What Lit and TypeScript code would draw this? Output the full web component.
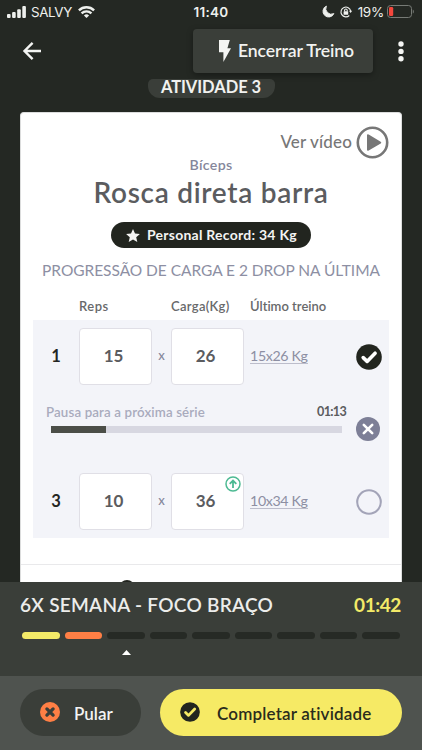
import { LitElement, html, css, svg } from "lit";
import { customElement, property } from "lit/decorators.js";
import { classMap } from "lit/directives/class-map.js";
import { styleMap } from "lit/directives/style-map.js";

const base = css`
  * { box-sizing: border-box; }
  svg { display: block; flex: none; overflow: visible; }
  span, div { white-space: nowrap; font-variant-ligatures: none; }
`;

const checkMark = svg`<path d="M7.2 13.6l3.9 3.8 8-8.2" fill="none" stroke="var(--mark, #fff)" stroke-width="3.6" stroke-linecap="round" stroke-linejoin="round"/>`;

@customElement("status-bar")
export class StatusBar extends LitElement {
  static styles = [base, css`
    :host { display: grid; grid-template-columns: 1fr auto 1fr; align-items: center; height: 23px; padding: 0 7px; color: #eef0ed; font: 400 14px/20px Inter, "Liberation Sans", sans-serif; }
    .side { display: flex; align-items: center; }
    .end { justify-content: flex-end; }
    .carrier { margin: 0 6px 0 5px; font-size: 13.4px; letter-spacing: -.4px; }
    .clock { font-size: 13.5px; font-weight: 600; letter-spacing: .3px; }
    .pct { margin: 0 3px 0 6px; font-size: 13.5px; letter-spacing: -.25px; }
    .lock { margin-left: 6px; }
    .batt { margin-right: 1px; }
  `];
  render() {
    return html`
      <div class="side">
        <svg width="19" height="12" viewBox="0 0 19 12" fill="#eef0ed">
          <rect x="0" y="8" width="3.6" height="4" rx="1"/><rect x="5.1" y="6" width="3.6" height="6" rx="1"/><rect x="10.2" y="3.2" width="3.6" height="8.8" rx="1"/><rect x="15.3" y="0" width="3.6" height="12" rx="1"/>
        </svg>
        <span class="carrier">SALVY</span>
        <svg width="17" height="12" viewBox="0 0 17 12" fill="none" stroke="#eef0ed" stroke-width="2.4">
          <path d="M.9 4.3a10.9 10.9 0 0 1 15.2 0"/><path d="M3.6 7.4a7 7 0 0 1 9.8 0"/><path d="M8.5 12L5.9 9.5a3.7 3.7 0 0 1 5.2 0z" fill="#eef0ed" stroke="none"/>
        </svg>
      </div>
      <span class="clock">11:40</span>
      <div class="side end">
        <svg width="11" height="11" viewBox="0 0 11 11" fill="#eef0ed"><path d="M3.4.1A5.7 5.7 0 1 0 10.9 7.6 5.6 5.6 0 0 1 3.4.1z" stroke="#eef0ed" stroke-width=".9"/></svg>
        <svg class="lock" width="12" height="12" viewBox="0 0 12 12" fill="none" stroke="#eef0ed" stroke-width="1.1">
          <path d="M9.3 9.5A4.9 4.9 0 1 1 10.7 5"/><path d="M9 4.8h3.2L10.6 7z" fill="#eef0ed" stroke="none"/>
          <rect x="3.6" y="5.3" width="4.6" height="3.5" rx=".5" fill="#eef0ed" stroke="none"/><path d="M4.6 5.4V4.3a1.3 1.3 0 0 1 2.6 0v1.1"/>
        </svg>
        <span class="pct">19%</span>
        <svg class="batt" width="27" height="13" viewBox="0 0 27 13">
          <rect x=".5" y=".5" width="24" height="12" rx="3" fill="none" stroke="#777b76"/><rect x="2" y="2" width="4.2" height="9" rx="1.3" fill="#f4473c"/><path d="M25.8 4.4c1.4.6 1.4 3.6 0 4.2z" fill="#777b76"/>
        </svg>
      </div>`;
  }
}

@customElement("set-row")
export class SetRow extends LitElement {
  @property({ type: Number }) index = 1;
  @property({ type: Number }) reps = 0;
  @property({ type: Number }) load = 0;
  @property() last = "";
  @property({ type: Boolean }) done = false;
  @property({ type: Boolean }) raised = false;
  static styles = [base, css`
    :host { display: grid; grid-template-columns: 46px 73px 19px 73px 6px 1fr 33px; align-items: center; height: 57px; color: #5b5c5f; }
    .n { text-align: center; color: #232522; font-weight: 700; font-size: 16.5px; margin-top: -2px; }
    .box { position: relative; height: 57px; display: flex; align-items: center; justify-content: center; background: #fff; border: 1.5px solid #e0dfe6; border-radius: 4px; font-weight: 700; font-size: 17px; letter-spacing: -.2px; padding-right: 4px; padding-bottom: 3px; }
    .x { text-align: center; color: #85879b; font-size: 13px; font-weight: 500; margin-top: -3px; }
    .last { grid-column: 6; justify-self: start; color: #8d8fa3; font-size: 14.2px; letter-spacing: -.35px; line-height: 14px; border-bottom: 1px solid #bcbdcb; height: 15px; margin-top: -1px; }
    .raise { position: absolute; top: 2px; right: 2px; }
    .mark { margin-top: 1px; }
  `];
  render() {
    return html`
      <span class="n">${this.index}</span>
      <div class="box">${this.reps}</div>
      <span class="x">x</span>
      <div class="box">${this.load}${this.raised ? html`
        <svg class="raise" width="16" height="16" viewBox="0 0 16 16" fill="none" stroke="#4dba93" stroke-width="1.5"><circle cx="8" cy="8" r="7"/><path d="M8 12V4.6M4.7 7.9L8 4.6l3.3 3.3" stroke-width="1.8"/></svg>` : ""}</div>
      <span class="last">${this.last}</span>
      <svg class="mark" width="26" height="26" viewBox="0 0 26 26">${this.done
        ? svg`<circle cx="13" cy="13" r="12.8" fill="#22251f"/>${checkMark}`
        : svg`<circle cx="13" cy="13" r="11.8" fill="none" stroke="#a3a4b8" stroke-width="2.1"/>`}</svg>`;
  }
}

@customElement("exercise-card")
export class ExerciseCard extends LitElement {
  static styles = [base, css`
    :host { display: block; height: 470px; margin: 14px 20px 0; background: #fff; border-radius: 4px 4px 0 0; border: 1px solid #dcdddd; border-bottom: 0; color: #5b5c5f; overflow: hidden; }
    .video { display: flex; align-items: center; justify-content: flex-end; height: 32px; margin: 13px 12px 0; font-size: 17px; color: #777; font-weight: 500; gap: 4px; letter-spacing: .15px; }
    .video span { margin-top: -2px; }
    .muscle { text-align: center; margin-top: -3px; height: 20px; line-height: 19px; font-size: 14.2px; letter-spacing: .35px; font-weight: 600; color: #85879b; }
    .name { text-align: center; font-size: 28px; line-height: 32px; height: 34px; margin-top: 1px; font-weight: 600; letter-spacing: .7px; }
    .record { display: flex; align-items: center; width: 200px; height: 26px; margin: 12px auto 0; padding-left: 15px; gap: 7px; border-radius: 14px; background: #22251f; color: #f4f4f3; font-size: 14px; letter-spacing: .25px; font-weight: 700; }
    .record span { margin-top: -2px; }
    .note { text-align: center; margin-top: 12px; height: 22px; line-height: 21px; font-size: 15.5px; letter-spacing: -.04px; color: #8d8fa3; }
    .heads { display: grid; grid-template-columns: 92px 79px 1fr; padding-left: 58px; margin-top: 14px; height: 24px; line-height: 20px; font-size: 13px; font-weight: 600; color: #68696b; }
    .reps { letter-spacing: .45px; }
    .load { letter-spacing: .3px; }
    .sets { margin: 0 12px; padding: 8px 0; height: 218px; background: #f3f4f9; }
    .rest { display: grid; grid-template-columns: 1fr 43px; height: 88px; padding: 18px 0 0 13px; }
    .labels { display: flex; justify-content: space-between; line-height: 18px; font-size: 13.3px; color: #a9abbd; font-weight: 600; }
    .pause { letter-spacing: .13px; }
    .time { color: #5b5c5f; font-size: 12.6px; letter-spacing: -.7px; font-weight: 700; }
    .track { margin: 5px 4px 0 5px; height: 7px; background: #d7d7e1; }
    .fill { height: 7px; background: #4b4e48; }
    .stop { margin: 14px 0 0 10px; }
    .rule { margin-top: 26px; border-top: 1px solid #e9e9eb; height: 18px; display: flex; align-items: flex-end; padding-left: 98px; }
    .next { width: 16px; height: 2px; overflow: hidden; }
  `];
  render() {
    return html`
      <div class="video"><span>Ver vídeo</span><svg width="33" height="33" viewBox="0 0 33 33"><circle cx="16.5" cy="16.5" r="14.7" fill="none" stroke="#777" stroke-width="2.6"/><path d="M11 9.5v14q0 2 1.7 1l12-7q1.3-.9 0-1.8l-12-7.1q-1.7-1-1.7.9z" fill="#777"/></svg></div>
      <div class="muscle">Bíceps</div>
      <div class="name">Rosca direta barra</div>
      <div class="record"><svg width="14" height="13" viewBox="0 0 14 13" fill="#f4f4f3"><path d="M7 0l2 4.5 4.9.5-3.7 3.3 1.1 4.7L7 10.5 2.7 13l1.1-4.7L.1 5 5 4.5z"/></svg><span>Personal Record: 34 Kg</span></div>
      <div class="note">PROGRESSÃO DE CARGA E 2 DROP NA ÚLTIMA</div>
      <div class="heads"><span class="reps">Reps</span><span class="load">Carga(Kg)</span><span>Último treino</span></div>
      <div class="sets">
        <set-row .index=${1} .reps=${15} .load=${26} .last=${"15x26 Kg"} done></set-row>
        <div class="rest">
          <div>
            <div class="labels"><span class="pause">Pausa para a próxima série</span><span class="time">01:13</span></div>
            <div class="track"><div class="fill" style=${styleMap({ width: "19%" })}></div></div>
          </div>
          <svg class="stop" width="24" height="24" viewBox="0 0 24 24"><circle cx="12" cy="12" r="12" fill="#7d7f97"/><path d="M7.8 7.8l8.4 8.4M16.2 7.8l-8.4 8.4" stroke="#fff" stroke-width="2.6" stroke-linecap="round"/></svg>
        </div>
        <set-row .index=${3} .reps=${10} .load=${36} .last=${"10x34 Kg"} raised></set-row>
      </div>
      <div class="rule"><div class="next"><svg width="16" height="16" viewBox="0 0 16 16"><circle cx="8" cy="8" r="8" fill="#22251f"/></svg></div></div>`;
  }
}

@customElement("workout-footer")
export class WorkoutFooter extends LitElement {
  static styles = [base, css`
    :host { display: block; }
    .plan { height: 94px; background: #3a3e39; padding: 12px 20px 0; }
    .line { display: flex; justify-content: space-between; height: 22px; line-height: 21px; font-size: 19px; font-weight: 600; color: #ecedeb; letter-spacing: .28px; }
    .elapsed { color: #f3ea68; letter-spacing: -.4px; font-weight: 700; padding-right: 1px; }
    .steps { display: grid; grid-template-columns: repeat(9, 1fr); gap: 5px; margin: 16px 2px 0; }
    .step { height: 7px; border-radius: 4px; background: #262a25; }
    .done { background: #f3ea68; }
    .skipped { background: #ff7f45; }
    .cursor { margin: 11px 0 0 102px; }
    .actions { display: flex; gap: 19px; height: 74px; padding: 13px 20px; background: #4f534f; }
    .btn { display: flex; align-items: center; height: 47px; border-radius: 24px; font-size: 17px; font-weight: 600; }
    .btn span { margin-top: 2px; }
    .btn svg { margin-top: -1px; }
    .skip { width: 121px; padding-left: 20px; gap: 14px; background: #3a3e39; color: #f4f4f3; }
    .complete { flex: 1; padding-left: 20px; gap: 17px; background: #f6ea65; color: #2a2c1c; letter-spacing: .17px; }
    .tick { --mark: #f6ea65; }
  `];
  render() {
    return html`
      <div class="plan">
        <div class="line"><span>6X SEMANA - FOCO BRAÇO</span><span class="elapsed">01:42</span></div>
        <div class="steps">${Array.from({ length: 9 }, (_, i) => html`<div class=${classMap({ step: true, done: i === 0, skipped: i === 1 })}></div>`)}</div>
        <svg class="cursor" width="9" height="5" viewBox="0 0 9 5" fill="#fff"><path d="M4.5 0L9 5H0z"/></svg>
      </div>
      <div class="actions">
        <div class="btn skip"><svg width="20" height="20" viewBox="0 0 20 20"><circle cx="10" cy="10" r="10" fill="#ff7f45"/><path d="M6.9 6.9l6.2 6.2M13.1 6.9l-6.2 6.2" stroke="#3a3e39" stroke-width="3.3" stroke-linecap="round"/></svg><span>Pular</span></div>
        <div class="btn complete"><svg class="tick" width="20" height="20" viewBox="0 0 26 26"><circle cx="13" cy="13" r="12.8" fill="#22251f"/>${checkMark}</svg><span>Completar atividade</span></div>
      </div>`;
  }
}

@customElement("app-root")
export class AppRoot extends LitElement {
  static styles = [base, css`
    :host { display: block; width: 422px; height: 750px; overflow: hidden; background: #242823; font-family: Lato, "Liberation Sans", sans-serif; }
    .bar { display: flex; align-items: center; height: 56px; padding: 0 18px 0 23px; }
    .finish { display: flex; align-items: center; margin: 0 25px 0 auto; width: 180px; height: 44px; padding-left: 26px; gap: 7px; border-radius: 4px; background: #3a3e39; box-shadow: 0 2px 6px rgba(0,0,0,.35); color: #f1f2f0; font-size: 17.6px; letter-spacing: -.1px; font-weight: 600; }
    .finish span { margin-top: -1px; }
    .activity { width: 127px; height: 19px; line-height: 17px; margin: 0 auto; border-radius: 5px 5px 12px 12px; background: #3a3e39; color: #f1f2f0; text-align: center; font-size: 16.5px; letter-spacing: -.05px; font-weight: 700; }
  `];
  render() {
    return html`
      <status-bar></status-bar>
      <div class="bar">
        <svg width="18" height="18" viewBox="0 0 18 18" fill="none" stroke="#f4f5f3" stroke-width="2.4"><path d="M18 9H2M9.6.9L1.5 9l8.1 8.1"/></svg>
        <div class="finish"><svg width="12" height="22" viewBox="0 0 12 22" fill="#f4f5f3"><path d="M0 0h10.8L8.4 8.2H12L4.4 22V12.3H0z"/></svg><span>Encerrar Treino</span></div>
        <svg width="6" height="21" viewBox="0 0 6 21" fill="#f4f5f3"><circle cx="3" cy="3" r="2.7"/><circle cx="3" cy="10.4" r="2.7"/><circle cx="3" cy="17.8" r="2.7"/></svg>
      </div>
      <div class="activity">ATIVIDADE 3</div>
      <exercise-card></exercise-card>
      <workout-footer></workout-footer>`;
  }
}
